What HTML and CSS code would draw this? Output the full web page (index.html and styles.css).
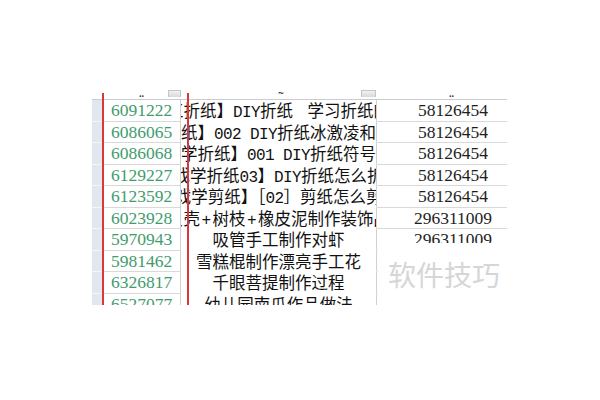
FILE: index.html
```html
<!DOCTYPE html>
<html lang="zh">
<head>
<meta charset="utf-8">
<link rel="stylesheet" href="styles.css">
</head>
<body>
<div class="page">
  <div class="sheet">
    <div class="strip head"></div>
    <div class="id head"><span class="htxt">.. </span><span class="dd"></span></div>
    <div class="title head"><span class="htxt">~</span><span class="dd"></span></div>
    <div class="num head"><span class="htxt">..</span></div>

    <div class="strip"></div>
    <div class="id">6091222</div>
    <div class="title"><span class="t">【手工折纸】<b class="lat">DIY</b>折纸<b class="lat gap"> </b>学习折纸的基本</span></div>
    <div class="num">58126454</div>

    <div class="strip"></div>
    <div class="id">6086065</div>
    <div class="title"><span class="t">【折纸】<b class="lat">002 DIY</b>折纸冰激凌和甜筒</span></div>
    <div class="num">58126454</div>

    <div class="strip"></div>
    <div class="id">6086068</div>
    <div class="title"><span class="t">【跟我学折纸】<b class="lat">001 DIY</b>折纸符号大全图</span></div>
    <div class="num">58126454</div>

    <div class="strip"></div>
    <div class="id">6129227</div>
    <div class="title"><span class="t">【幼儿游戏学折纸<b class="lat">03</b>】<b class="lat">DIY</b>折纸怎么折小船图解</span></div>
    <div class="num">58126454</div>

    <div class="strip"></div>
    <div class="id">6123592</div>
    <div class="title"><span class="t">【幼儿游戏学剪纸】［<b class="lat">02</b>］剪纸怎么剪窗花图解</span></div>
    <div class="num">58126454</div>

    <div class="strip"></div>
    <div class="id">6023928</div>
    <div class="title"><span class="t">贝壳<b class="lat plus">+</b>树枝<b class="lat plus">+</b>橡皮泥制作装饰品</span></div>
    <div class="num">296311009</div>

    <div class="strip"></div>
    <div class="id">5970943</div>
    <div class="title"><span class="t">吸管手工制作对虾</span></div>
    <div class="num">296311009</div>

    <div class="strip"></div>
    <div class="id">5981462</div>
    <div class="title"><span class="t">雪糕棍制作漂亮手工花</span></div>
    <div class="num"></div>

    <div class="strip"></div>
    <div class="id">6326817</div>
    <div class="title"><span class="t">千眼菩提制作过程</span></div>
    <div class="num"></div>

    <div class="strip"></div>
    <div class="id">6527077</div>
    <div class="title"><span class="t">幼儿园南瓜作品做法</span></div>
    <div class="num"></div>
  </div>
  <div class="redline red-a"></div>
  <div class="redline red-b"></div>
  <div class="cover"><span class="wm">软件技巧</span></div>
</div>
</body>
</html>
```

FILE: styles.css
```css
html, body {
  margin: 0;
  padding: 0;
  background: #ffffff;
}

.page {
  position: relative;
  width: 600px;
  height: 400px;
  overflow: hidden;
}

.sheet {
  margin: 75px 0 0 92px;
  height: 230px;
  overflow: hidden;
  display: grid;
  grid-template-columns: 10px 79px 196px 130px;
  grid-template-rows: 25px;
  grid-auto-rows: 21.5px;
  font-family: "Liberation Serif", serif;
  font-size: 17.5px;
  color: #1e1e1e;
}

.sheet > div {
  box-sizing: border-box;
  border-bottom: 1px solid #d7d9db;
  white-space: nowrap;
  overflow: hidden;
}

.strip {
  background: #e2e7ee;
  border-bottom-color: #f4f6f9 !important;
}

.id {
  color: #3f9c6d;
  text-align: center;
  line-height: 21px;
  border-right: 1px solid #cfd1d3;
  padding-left: 1px;
}

.title {
  display: flex;
  justify-content: center;
  border-right: 1px solid #cfd1d3;
  border-bottom-color: transparent !important;
  font-family: "Noto Sans CJK SC", sans-serif;
  font-size: 16.5px;
  line-height: 21px;
  color: #111;
}

.title .t {
  flex: none;
  white-space: pre;
}

.lat {
  font-weight: normal;
  font-family: "Liberation Mono", monospace;
  font-size: 16px;
  letter-spacing: -0.6px;
}

.lat.gap {
  letter-spacing: 5px;
}

.lat.plus {
  letter-spacing: 0;
  padding: 0 1.5px;
}

.num {
  text-align: center;
  padding-left: 22px;
  line-height: 21px;
}

.head {
  position: relative;
  border-bottom-color: #c9ccd0 !important;
  background: #fff;
}

.strip.head {
  background: #fff;
}

.title.head {
  border-right: none;
}

.id.head {
  border-right: none;
}

.htxt {
  position: absolute;
  bottom: 1px;
  font-size: 10px;
  line-height: 8px;
  color: #333;
  font-weight: bold;
}

.id .htxt {
  left: 37px;
}

.title .htxt {
  left: 97px;
  bottom: 2px;
}

.num .htxt {
  left: 72px;
}

.dd {
  position: absolute;
  right: 0;
  bottom: 2px;
  width: 11px;
  height: 6px;
  border: 1px solid #c4c6c9;
  border-bottom: none;
  background: linear-gradient(#f2f2f2, #d8d8d8);
}

.title .dd {
  right: 1px;
  width: 13px;
}

.redline {
  position: absolute;
  top: 93px;
  width: 2px;
  height: 212px;
  background: #d5393c;
}

.red-a {
  left: 102px;
}

.red-b {
  left: 187px;
}

.cover {
  position: absolute;
  left: 378px;
  top: 243px;
  width: 222px;
  height: 70px;
  background: #ffffff;
}

.wm {
  position: absolute;
  left: 10px;
  top: 14px;
  font-family: "Noto Sans CJK SC", sans-serif;
  font-size: 28px;
  line-height: 34px;
  color: #d6d6d6;
}
```
